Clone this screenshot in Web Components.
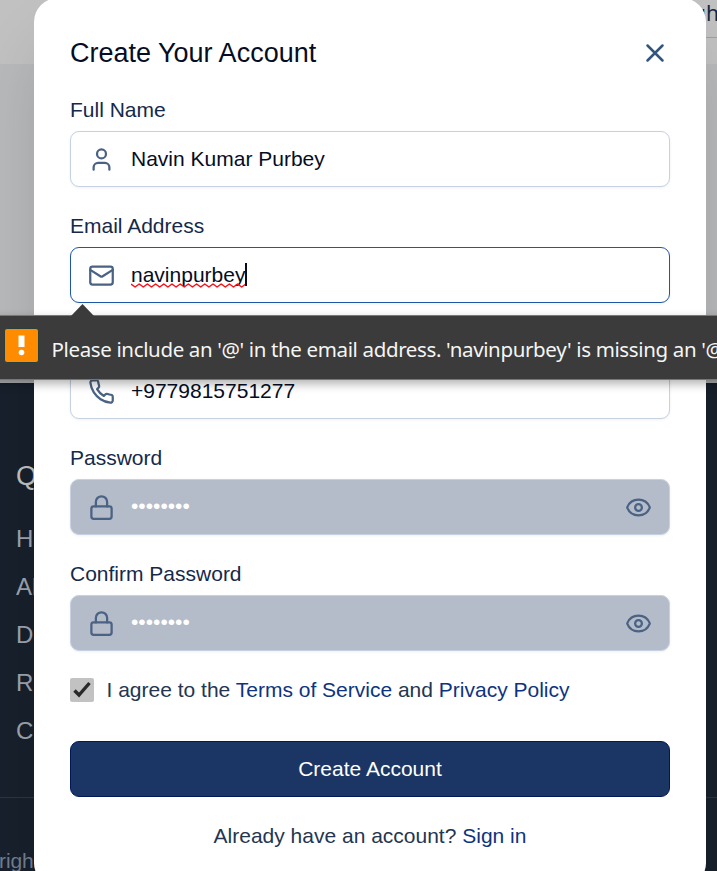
<!DOCTYPE html>
<html lang="en">
<head>
<meta charset="utf-8">
<title>Create Your Account</title>
<style>
html,body{margin:0;height:100%;overflow:hidden}
body{font-family:"Liberation Sans",Arial,sans-serif;font-size:21px;position:relative}
</style>
</head>
<body>
<page-backdrop></page-backdrop>
<account-dialog></account-dialog>
<validation-bubble>Please include an '@' in the email address. 'navinpurbey' is missing an '@'.</validation-bubble>
<script>
const define = (name, html) => customElements.define(name, class extends HTMLElement {
  connectedCallback() {
    if (this.shadowRoot) return;
    const t = document.createElement('template');
    t.innerHTML = typeof html === 'function' ? html(this) : html;
    this.attachShadow({mode: 'open'}).append(t.content.cloneNode(true));
  }
});

const glyphs = {
  user: '<path d="M19 21v-2a4 4 0 0 0-4-4H9a4 4 0 0 0-4 4v2"/><circle cx="12" cy="7" r="4"/>',
  mail: '<rect x="2" y="4" width="20" height="16" rx="2"/><path d="m22 7-8.97 5.7a1.94 1.94 0 0 1-2.06 0L2 7"/>',
  phone: '<path d="M22 16.92v3a2 2 0 0 1-2.18 2 19.79 19.79 0 0 1-8.63-3.07 19.5 19.5 0 0 1-6-6 19.79 19.79 0 0 1-3.07-8.67A2 2 0 0 1 4.11 2h3a2 2 0 0 1 2 1.72 12.84 12.84 0 0 0 .7 2.81 2 2 0 0 1-.45 2.11L8.09 9.91a16 16 0 0 0 6 6l1.27-1.27a2 2 0 0 1 2.11-.45 12.84 12.84 0 0 0 2.81.7A2 2 0 0 1 22 16.92z"/>',
  lock: '<rect x="3" y="11" width="18" height="11" rx="2"/><path d="M7 11V7a5 5 0 0 1 10 0v4"/>',
  eye: '<path d="M2.062 12.348a1 1 0 0 1 0-.696 10.75 10.75 0 0 1 19.876 0 1 1 0 0 1 0 .696 10.75 10.75 0 0 1-19.876 0"/><circle cx="12" cy="12" r="3"/>',
  close: '<path d="M18 6 6 18M6 6l12 12"/>'
};
define('line-icon', el => `<style>:host{display:block;width:27px;height:27px;flex:none;color:#4a6284}
svg{display:block;width:100%;height:100%;fill:none;stroke:currentColor;stroke-width:2;stroke-linecap:round;stroke-linejoin:round}</style>
<svg viewBox="0 0 24 24">${glyphs[el.getAttribute('name')]}</svg>`);

define('page-backdrop', `<style>
:host{display:flex;flex-direction:column;height:871px;overflow:hidden}
header{box-sizing:border-box;height:64px;flex:none;background:#c1c1c1;display:flex;justify-content:flex-end}
.search{box-sizing:border-box;width:24px;height:38px;border-bottom:1px solid #99a1ad;color:#16263c;line-height:27px;font-family:"Noto Sans",sans-serif;white-space:nowrap;overflow:hidden}
main{height:319px;flex:none;background:#b8b9bb}
footer{flex:1;background:#17202c;color:#9da4af;font-size:24px}
nav{display:flex;flex-direction:column;padding:68px 16px 0;height:346px;box-sizing:content-box}
nav a{line-height:48px}
nav b{font-weight:400;font-size:27px;line-height:50px;color:#c1c1c1;margin-bottom:14px}
.legal{border-top:1px solid #2b3643;padding-top:48px;line-height:30px;font-size:21px;color:#717e90;letter-spacing:-.1px;text-indent:-1px}
</style>
<header><div class="search">gh</div></header><main></main>
<footer><nav><b>Q</b><a>H</a><a>Al</a><a>D</a><a>R</a><a>C</a></nav><div class="legal">righ</div></footer>`);

define('text-field', el => `<style>
:host{display:flex;flex-direction:column;gap:6px;color:#15294b}
label{line-height:30px;min-height:30px}
.box{box-sizing:border-box;height:56px;border:1px solid #c6d2e2;border-radius:9px;background:#fff;display:flex;align-items:center;padding:0 17px;box-shadow:0 1px 3px rgba(0,0,0,.06)}
.value{flex:1;margin-left:16px;color:#050d24;line-height:30px;padding-bottom:1px}
:host([focused]) .box{border-color:#1f57a8}
:host([masked]) .box{background:#b4bbc9}
:host([masked]) .value{color:#fff;padding-bottom:2px}
</style>
<label>${el.getAttribute('label') || ''}</label>
<div class="box"><line-icon name="${el.getAttribute('icon')}"></line-icon><div class="value"><slot></slot></div>${el.hasAttribute('masked') ? '<line-icon name="eye"></line-icon>' : ''}</div>`);

let wave = 'M0 2';
for (let i = 0; i < 14; i++) wave += 'L4.1 5 8.2 2'.replace(/[\d.]+ \d|[\d.]+ \d/g, p => { const [x, y] = p.split(' '); return (+x + i * 8.2).toFixed(1) + ' ' + y; });
define('misspelled-text', `<style>:host{display:inline-block;position:relative}
svg{position:absolute;left:0;top:22px;width:116px;height:7px;fill:none;stroke:#fa0f16;stroke-width:1.5;stroke-linejoin:round}
i{position:absolute;left:114px;top:3px;width:2px;height:23px;background:#050d24}</style>
<slot></slot><svg viewBox="0 0 116 7"><path d="${wave}"/></svg><i></i>`);

define('account-dialog', `<style>
:host{box-sizing:border-box;position:absolute;left:34px;top:-2px;width:672px;height:889px;padding:36px;border-radius:24px;background:#fff;box-shadow:0 37px 75px -18px rgba(0,0,0,.2);color:#243650}
.head{display:flex;justify-content:space-between;align-items:center;height:38px}
h1{margin:0;font-size:27px;font-weight:400;color:#050d24;line-height:36px}
.head line-icon{width:30px;height:30px;color:#31557c}
form{display:flex;flex-direction:column;gap:24px;margin-top:23px}
.agree{display:flex;align-items:center;gap:12.5px;height:30px;margin-bottom:12px;line-height:30px}
.check{width:24px;height:24px;border-radius:2px;background:#c2c2c2}
.check svg{display:block}
a{color:#0d3480}
button{height:56px;border:1px solid #00185b;border-radius:9px;background:#1b3664;color:#fff;font:inherit;padding:0}
p{margin:0;text-align:center;line-height:30px}
</style>
<div class="head"><h1>Create Your Account</h1><line-icon name="close"></line-icon></div>
<form>
<text-field label="Full Name" icon="user">Navin Kumar Purbey</text-field>
<text-field label="Email Address" icon="mail" focused><misspelled-text>navinpurbey</misspelled-text></text-field>
<text-field icon="phone">+9779815751277</text-field>
<text-field label="Password" icon="lock" masked>••••••••</text-field>
<text-field label="Confirm Password" icon="lock" masked>••••••••</text-field>
<div class="agree"><div class="check"><svg width="24" height="24"><path d="M4.5 12.5 9 17 19.5 5" fill="none" stroke="#292929" stroke-width="3.4"/></svg></div><span>I agree to the <a>Terms of Service</a> and <a>Privacy Policy</a></span></div>
<button type="button">Create Account</button>
<p>Already have an account? <a>Sign in</a></p>
</form>`);

define('validation-bubble', `<style>
:host{box-sizing:border-box;position:absolute;left:-8px;top:315px;width:740px;height:65px;background:#3b3b3b;border:1px solid #777;box-shadow:0 4px 9px rgba(0,0,0,.3);display:flex;align-items:center;padding-left:11px;padding-bottom:4px;color:#f5f5f5;font:20.5px/30px "Noto Sans","Open Sans",sans-serif;white-space:nowrap}
.arrow{position:absolute;left:77.5px;top:-12px;width:23px;height:13px}
.warn{width:35px;height:35px;flex:none;display:block;margin-right:12.5px}
.text{padding-top:6px;letter-spacing:-.36px}
</style>
<svg class="arrow" viewBox="0 0 23 13"><path d="M0 13V12L11.5 0 23 12v1z" fill="#3b3b3b"/></svg>
<svg class="warn" viewBox="0 0 35 35"><rect x=".5" y=".5" width="34" height="34" rx="2.5" fill="#ff8c00" stroke="#293f3f"/><path d="M14.5 7.500h6v11.500h-6z" fill="#fff"/><circle cx="17.5" cy="24.500" r="2.800" fill="#fff"/></svg>
<span class="text"><slot></slot></span>`);
</script>
</body>
</html>
